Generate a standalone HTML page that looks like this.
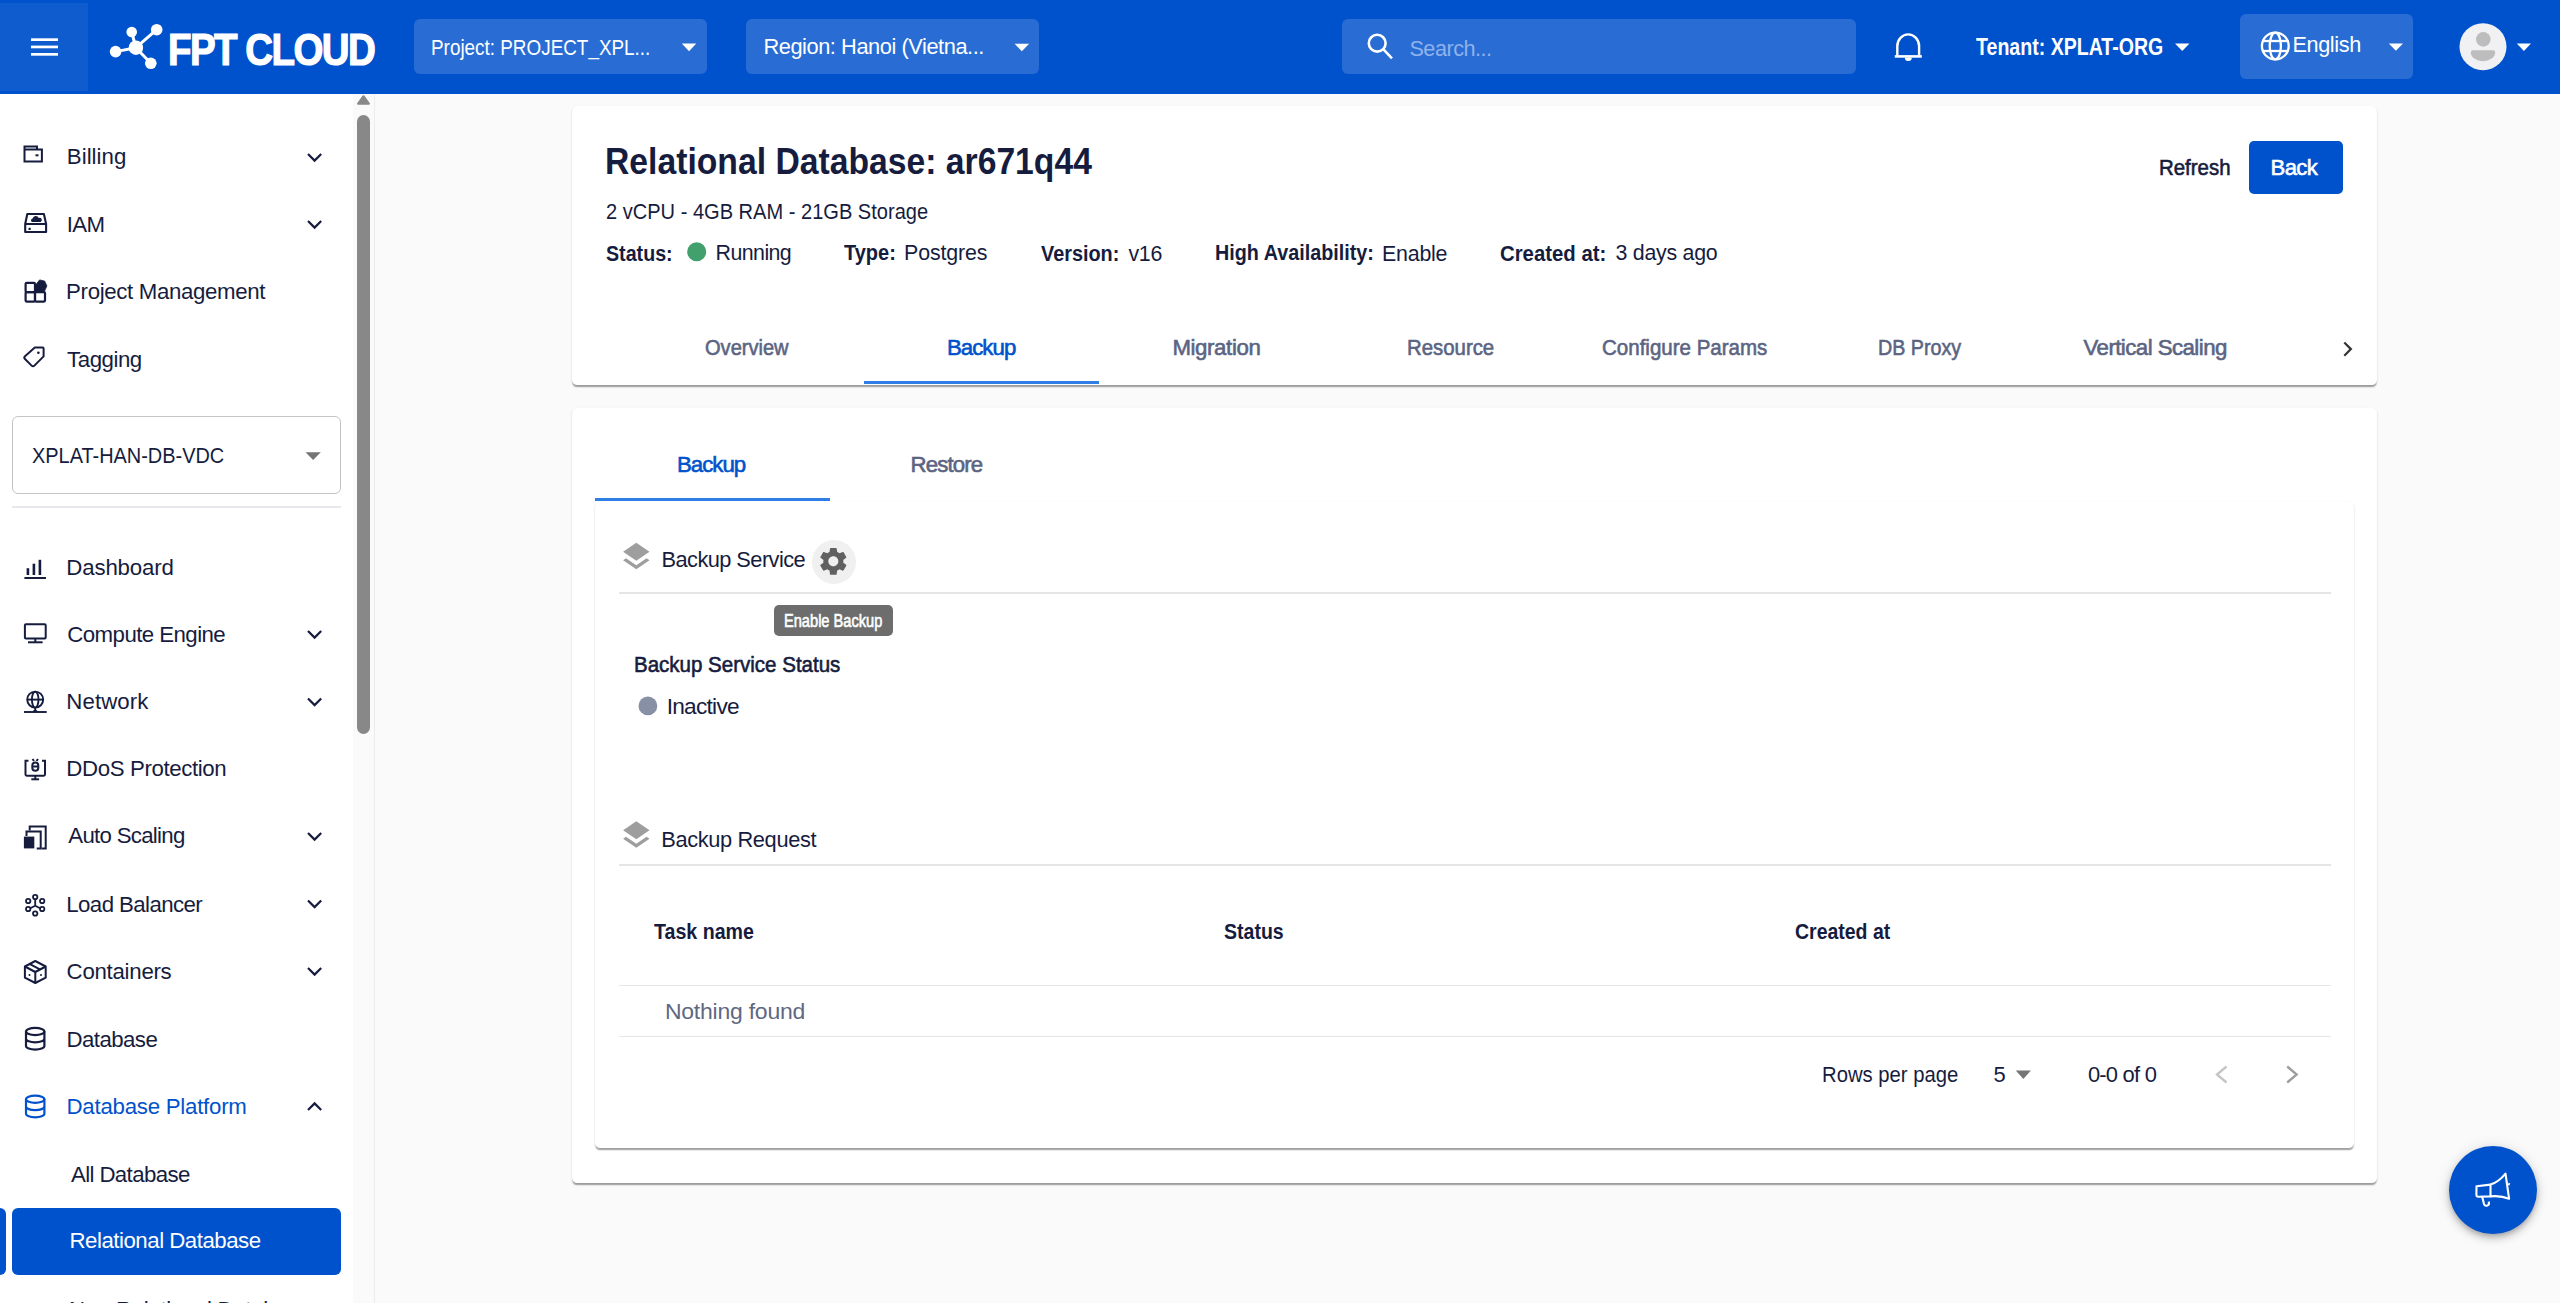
<!DOCTYPE html>
<html><head><meta charset="utf-8">
<style>
html,body{margin:0;padding:0}
body{width:2560px;height:1303px;overflow:hidden;background:#fafafa;position:relative;font-family:"Liberation Sans",sans-serif}
.a{position:absolute;box-sizing:border-box}
.t{position:absolute;white-space:nowrap;line-height:1.117;font-family:"Liberation Sans",sans-serif}
#hdr{left:0;top:0;width:2560px;height:94px;background:#0052cc}
.hbox{background:rgba(255,255,255,0.16);border-radius:6px}
.card{background:#fff;border-radius:5.3px;box-shadow:0 2.67px 1.33px -1.33px rgba(0,0,0,0.2),0 1.33px 1.33px 0 rgba(0,0,0,0.14),0 1.33px 2.6px 0 rgba(0,0,0,0.10)}
</style></head><body>
<!-- header -->
<div class="a" id="hdr"></div>
<div class="a" style="left:0;top:3px;width:88px;height:88px;background:rgba(255,255,255,0.06)"></div>
<div class="a hbox" style="left:414px;top:19px;width:293px;height:55px"></div>
<div class="a hbox" style="left:746px;top:19px;width:293px;height:55px"></div>
<div class="a hbox" style="left:1342px;top:19px;width:514px;height:55px"></div>
<div class="a hbox" style="left:2240px;top:14px;width:173px;height:65px"></div>
<!-- sidebar -->
<div class="a" style="left:0;top:94px;width:374px;height:1209px;background:#fff"></div>
<div class="a" style="left:353px;top:94px;width:21px;height:1209px;background:#fafafa"></div>
<div class="a" style="left:374px;top:94px;width:1px;height:1209px;background:#ececec"></div>
<div class="a" style="left:357px;top:114.5px;width:13px;height:619px;background:#888;border-radius:7px"></div>
<div class="a" style="left:12px;top:416px;width:329px;height:78px;border:1.33px solid #c4c4c4;border-radius:6px"></div>
<div class="a" style="left:12px;top:506px;width:329px;height:1.5px;background:#e6e8ee"></div>
<div class="a" style="left:12px;top:1207.5px;width:329px;height:67.5px;background:#0052cc;border-radius:6px"></div>
<div class="a" style="left:0;top:1207.5px;width:5.5px;height:67.5px;background:#0052cc;border-radius:0 6px 6px 0"></div>
<!-- main cards -->
<div class="a card" style="left:572px;top:105.5px;width:1805px;height:279px"></div>
<div class="a" style="left:2248.5px;top:140.7px;width:94px;height:53px;background:#0052cc;border-radius:5px"></div>
<div class="a" style="left:864px;top:381px;width:235px;height:3.3px;background:#2f7ee6"></div>
<div class="a card" style="left:572px;top:408px;width:1805px;height:775px"></div>
<div class="a" style="left:595px;top:498px;width:235px;height:3.3px;background:#2f7ee6"></div>
<div class="a card" style="left:595.4px;top:501.5px;width:1759px;height:646.5px"></div>
<div class="a" style="left:619px;top:592px;width:1712px;height:1.5px;background:#e5e5e5"></div>
<div class="a" style="left:811.5px;top:539.5px;width:44px;height:44px;border-radius:50%;background:#f0f0f0"></div>
<div class="a" style="left:774.2px;top:604.5px;width:119px;height:31.5px;border-radius:5px;background:rgba(97,97,97,0.92)"></div>
<div class="a" style="left:619px;top:864px;width:1712px;height:1.5px;background:#e5e5e5"></div>
<div class="a" style="left:619px;top:984.8px;width:1712px;height:1.4px;background:#e6e6e6"></div>
<div class="a" style="left:619px;top:1035.8px;width:1712px;height:1.4px;background:#e6e6e6"></div>
<div class="a" style="left:2448.5px;top:1146.4px;width:88px;height:88px;border-radius:50%;background:#0052cc;box-shadow:0 3px 5px -1px rgba(0,0,0,0.2),0 5px 8px 0 rgba(0,0,0,0.14),0 1px 14px 0 rgba(0,0,0,0.12)"></div>
<svg class="a" style="left:0;top:0" width="2560" height="1303" viewBox="0 0 2560 1303">
<!-- hamburger -->
<g fill="#fff"><rect x="31" y="38.3" width="27" height="2.7"/><rect x="31" y="45.6" width="27" height="2.7"/><rect x="31" y="53" width="27" height="2.7"/></g>
<!-- logo icon -->
<g fill="#fff" stroke="#fff">
<line x1="135.9" y1="47.7" x2="131.7" y2="32" stroke-width="3"/>
<line x1="135.9" y1="47.7" x2="156.7" y2="29.7" stroke-width="3"/>
<line x1="135.9" y1="47.7" x2="115.6" y2="51.6" stroke-width="3"/>
<line x1="135.9" y1="47.7" x2="150.8" y2="63.3" stroke-width="3"/>
<circle cx="135.9" cy="47.7" r="7.2" stroke="none"/>
<circle cx="131.7" cy="32" r="5.3" stroke="none"/>
<circle cx="156.7" cy="29.7" r="5.8" stroke="none"/>
<circle cx="115.6" cy="51.6" r="5.8" stroke="none"/>
<circle cx="150.8" cy="63.3" r="5.8" stroke="none"/>
</g>
<!-- header arrows -->
<g fill="#fff">
<path d="M681.8 43.5h14.5l-7.25 7.8z"/>
<path d="M1014.6 43.7h14.5l-7.25 7.5z"/>
<path d="M2175 43.5h14.5l-7.25 7.5z"/>
<path d="M2388.8 43.4h14.2l-7.1 7.4z"/>
<path d="M2516.8 43.4h14.2l-7.1 7.6z"/>
</g>
<!-- search icon -->
<g fill="none" stroke="#fff" stroke-width="2.6"><circle cx="1377.2" cy="43.2" r="8.4"/><line x1="1383.2" y1="49.2" x2="1392" y2="58.3"/></g>
<!-- bell -->
<g fill="none" stroke="#fff" stroke-width="2.4">
<path d="M1897.3 55.6V46.2a10.9 11.8 0 0 1 21.8 0V55.6"/>
<line x1="1894.8" y1="56.4" x2="1921.8" y2="56.4" stroke-width="2.6"/>
</g>
<path d="M1904.8 57.5h7a3.5 3.6 0 0 1 -7 0z" fill="#fff"/>
<!-- globe -->
<g fill="none" stroke="#fff" stroke-width="2.3">
<circle cx="2275.3" cy="46" r="13.4"/>
<ellipse cx="2275.3" cy="46" rx="5.6" ry="13.4"/>
<line x1="2262" y1="41" x2="2288.6" y2="41"/><line x1="2262" y1="51" x2="2288.6" y2="51"/>
</g>
<!-- avatar -->
<circle cx="2483" cy="46.7" r="23.5" fill="#f1f1f3"/>
<circle cx="2483.3" cy="39.4" r="7.3" fill="#bdbdbd"/>
<path d="M2473 50.2h20a2.2 2.2 0 0 1 2.2 2.2a12.2 8.8 0 0 1 -24.4 0a2.2 2.2 0 0 1 2.2-2.2z" fill="#bdbdbd"/>
<!-- sidebar scrollbar arrow -->
<path d="M363.5 96.2l5.4 7.5h-10.8z" fill="#888" stroke="#888" stroke-width="2" stroke-linejoin="round"/>
<!-- sidebar icons -->
<g fill="none" stroke="#161c3e" stroke-width="2">
<!-- billing wallet -->
<path d="M24.5 149.5h17.4v12h-17.4z M24.5 149.5v-3h12.5v3"/>
</g>
<rect x="35.5" y="154.3" width="3" height="2" fill="#161c3e"/>
<g fill="none" stroke="#161c3e" stroke-width="2.1" stroke-linejoin="round">
<!-- IAM drive -->
<path d="M27.3 214h16.6l2.2 10v8h-20.9v-8z M25.2 224h20.9"/>
</g>
<path d="M32 221.9a1.8 1.8 0 0 1 0.6-3.4a3.3 3.3 0 0 1 6.2-0.4a2 2 0 0 1 1.8 3.8z" fill="#161c3e"/>
<rect x="28.5" y="227.8" width="2.2" height="2.2" fill="#161c3e"/>
<!-- project mgmt -->
<g fill="none" stroke="#161c3e" stroke-width="2.2" stroke-linejoin="round">
<rect x="25.6" y="282.9" width="9.4" height="9.2" rx="1"/>
<rect x="25.6" y="292.1" width="9.4" height="9.5" rx="1"/>
<rect x="35" y="292.1" width="10" height="9.5" rx="1"/>
</g>
<path d="M35.6 291.6v-6.5l4-5.2l5 1.2l2.3 4.8l-2.6 5.7z" fill="#161c3e" stroke="#161c3e" stroke-width="0.8" stroke-linejoin="round"/>
<!-- tagging -->
<path d="M34.8 347.6H42.6a1 1 0 0 1 1 1V356.4L34.4 365.6a2 2 0 0 1 -2.8 0L25 359a2 2 0 0 1 0-2.8z" fill="none" stroke="#161c3e" stroke-width="2" stroke-linejoin="round"/>
<circle cx="38.4" cy="352.8" r="1.3" fill="#161c3e"/>
<!-- select arrow -->
<path d="M305.5 452.2h15.3l-7.65 7.7z" fill="#757575"/>
<!-- dashboard -->
<g fill="#161c3e"><rect x="26.6" y="568.2" width="2.6" height="6.8"/><rect x="32.6" y="563.7" width="2.6" height="11.3"/><rect x="38.6" y="559.8" width="2.6" height="15.2"/><rect x="24.4" y="577" width="21.6" height="2"/></g>
<!-- compute monitor -->
<g fill="none" stroke="#161c3e" stroke-width="2"><rect x="24.9" y="624.2" width="20.8" height="14.2" rx="1"/><line x1="35.3" y1="638.4" x2="35.3" y2="642"/><line x1="28" y1="642.3" x2="42.6" y2="642.3"/></g>
<!-- network globe -->
<g fill="none" stroke="#161c3e" stroke-width="1.9"><circle cx="35.2" cy="699.6" r="8"/><ellipse cx="35.2" cy="699.6" rx="3.3" ry="8"/><line x1="27.2" y1="699.6" x2="43.2" y2="699.6"/><path d="M35.2 707.6v2.5l-2 1.8 M35.2 710.1l2 1.8"/><line x1="24" y1="712" x2="46.7" y2="712"/></g>
<!-- ddos -->
<g fill="none" stroke="#161c3e" stroke-width="2"><path d="M28.5 760.8h-3v13.5a1.5 1.5 0 0 0 1.5 1.5h16.5a1.5 1.5 0 0 0 1.5-1.5v-13.5h-3"/><line x1="35.3" y1="775.8" x2="35.3" y2="779"/><line x1="31.3" y1="779.3" x2="39.1" y2="779.3"/><rect x="32.3" y="762.5" width="6" height="8.2" rx="3"/><path d="M32.5 759l1.5 2 M38 759l-1.5 2 M32.5 766.5h6"/></g>
<!-- auto scaling -->
<g fill="none" stroke="#161c3e" stroke-width="2"><path d="M29.7 830.5v-4h16v21.9h-4"/><path d="M26.5 836v-4.5h14.2v16.9h-4"/></g>
<rect x="23.9" y="836.6" width="10.4" height="11.8" fill="#161c3e"/>
<!-- load balancer -->
<g fill="none" stroke="#161c3e" stroke-width="1.8"><circle cx="35.2" cy="897" r="2.2"/><circle cx="28.2" cy="901" r="2.2"/><circle cx="42.2" cy="901" r="2.2"/><circle cx="28.2" cy="909" r="2.2"/><circle cx="42.2" cy="909" r="2.2"/><circle cx="35.2" cy="913.5" r="2.2"/><path d="M35.2 899.2v6.5 M35.2 905.7l-5 2.5 M35.2 905.7l5 2.5"/></g>
<!-- containers box -->
<g fill="none" stroke="#161c3e" stroke-width="2" stroke-linejoin="round"><path d="M35.3 961l10.4 5.5v11.2l-10.4 5.3l-10.4-5.3v-11.2z"/><path d="M24.9 966.5l10.4 5.5l10.4-5.5 M35.3 972v11 M29.5 963.8l10.4 5.5"/></g>
<circle cx="29.5" cy="975" r="1" fill="#161c3e"/><circle cx="41" cy="975" r="1" fill="#161c3e"/>
<!-- database -->
<g fill="none" stroke="#161c3e" stroke-width="2.2"><ellipse cx="35.2" cy="1031.5" rx="9.2" ry="3.6"/><path d="M26 1031.5v14.5a9.2 3.6 0 0 0 18.4 0v-14.5 M26 1038.8a9.2 3.6 0 0 0 18.4 0"/></g>
<g fill="none" stroke="#0052cc" stroke-width="2.2"><ellipse cx="35.2" cy="1099.3" rx="9.2" ry="3.6"/><path d="M26 1099.3v14.5a9.2 3.6 0 0 0 18.4 0v-14.5 M26 1106.6a9.2 3.6 0 0 0 18.4 0"/></g>
<!-- chevrons -->
<g fill="none" stroke="#161c3e" stroke-width="2.2" stroke-linejoin="miter">
<path d="M308 154l6.6 6.6l6.6-6.6"/>
<path d="M308 221l6.6 6.6l6.6-6.6"/>
<path d="M308 631l6.6 6.6l6.6-6.6"/>
<path d="M308 698.5l6.6 6.6l6.6-6.6"/>
<path d="M308 833l6.6 6.6l6.6-6.6"/>
<path d="M308 900.5l6.6 6.6l6.6-6.6"/>
<path d="M308 968l6.6 6.6l6.6-6.6"/>
<path d="M308 1110l6.6-6.6l6.6 6.6"/>
<path d="M2344.3 342.5l6.6 6.6l-6.6 6.6" stroke="#333"/>
</g>
<!-- layers icons -->
<g fill="#9e9e9e">
<path d="M636.3 542.7l13.2 9l-13.2 9l-13.2-9z"/>
<path d="M626 558.2l10.3 7l10.3-7l2.9 2l-13.2 9l-13.2-9z"/>
<path d="M636.3 821.2l13.2 9l-13.2 9l-13.2-9z"/>
<path d="M626 836.7l10.3 7l10.3-7l2.9 2l-13.2 9l-13.2-9z"/>
</g>
<!-- gear -->
<g transform="translate(816.6 544.6) scale(1.395)" fill="#616161"><path d="M19.14,12.94c0.04-0.3,0.06-0.61,0.06-0.94c0-0.32-0.02-0.64-0.07-0.94l2.03-1.58c0.18-0.14,0.23-0.41,0.12-0.61 l-1.92-3.32c-0.12-0.22-0.37-0.29-0.59-0.22l-2.39,0.96c-0.5-0.38-1.03-0.7-1.62-0.94L14.4,2.81c-0.04-0.24-0.24-0.41-0.48-0.41 h-3.84c-0.24,0-0.43,0.17-0.47,0.41L9.25,5.35C8.66,5.59,8.12,5.92,7.63,6.29L5.24,5.33c-0.22-0.08-0.47,0-0.59,0.22L2.740,8.87 C2.62,9.08,2.66,9.34,2.86,9.48l2.03,1.58C4.84,11.36,4.8,11.69,4.8,12s0.02,0.64,0.07,0.94l-2.03,1.58 c-0.18,0.14-0.23,0.41-0.12,0.61l1.92,3.32c0.12,0.22,0.37,0.29,0.59,0.22l2.39-0.96c0.5,0.38,1.03,0.7,1.62,0.94l0.36,2.54 c0.05,0.24,0.24,0.41,0.48,0.41h3.84c0.24,0,0.44-0.17,0.47-0.41l0.36-2.54c0.59-0.24,1.13-0.56,1.62-0.94l2.39,0.96 c0.22,0.08,0.47,0,0.59-0.22l1.92-3.32c0.12-0.22,0.07-0.47-0.12-0.61L19.14,12.94z M12,15.6c-1.98,0-3.6-1.62-3.6-3.6 s1.62-3.6,3.6-3.6s3.6,1.62,3.6,3.6S13.98,15.6,12,15.6z"/></g>
<!-- status dots -->
<circle cx="696.7" cy="251.8" r="9.5" fill="#41a06c"/>
<circle cx="647.9" cy="705.9" r="9.4" fill="#8890a6"/>
<!-- pagination -->
<path d="M2015.8 1070.6h15.1l-7.55 8.5z" fill="#757575"/>
<g fill="none" stroke-width="2.3"><path d="M2226.5 1066.5l-9.5 8l9.5 8" stroke="#c4c4c4"/><path d="M2287.2 1066.5l9.5 8l-9.5 8" stroke="#9e9e9e"/></g>
<!-- megaphone -->
<g fill="none" stroke="#fff" stroke-width="2.1" stroke-linejoin="round">
<path d="M2476.5 1186.2l14-1.6v11.8l-12.6 0.3a1.6 1.6 0 0 1 -1.5-1.6z"/>
<path d="M2490.5 1184.6q8.5-2.8 15-11l3.6 25.2q-8-3.4-18.6-2.4"/>
<path d="M2482.2 1196.7l1.8 7.4a2.6 2.6 0 0 0 5-1.2l-0.4-1.3"/>
<path d="M2508.2 1183.8l1.6 0.6" stroke-width="2.4"/>
</g>
</svg>

<div class="t" id="h_logo" style="left:167.80px;top:23.69px;font-size:44.77px;font-weight:700;color:#fff;letter-spacing:-1.797px;-webkit-text-stroke:1.2px #fff;transform:scaleX(0.8600);transform-origin:0 0;">FPT CLOUD</div>
<div class="t" id="h_proj" style="left:431.20px;top:35.57px;font-size:21.80px;font-weight:400;color:#fff;letter-spacing:0.000px;transform:scaleX(0.8664);transform-origin:0 0;">Project: PROJECT_XPL...</div>
<div class="t" id="h_reg" style="left:763.40px;top:35.47px;font-size:21.80px;font-weight:400;color:#fff;letter-spacing:-0.435px;">Region: Hanoi (Vietna...</div>
<div class="t" id="h_search" style="left:1409.40px;top:36.50px;font-size:21.66px;font-weight:400;color:#8fb1ec;letter-spacing:-0.500px;">Search...</div>
<div class="t" id="h_tenant" style="left:1976.00px;top:34.35px;font-size:23.26px;font-weight:700;color:#fff;letter-spacing:0.000px;transform:scaleX(0.8416);transform-origin:0 0;">Tenant: XPLAT-ORG</div>
<div class="t" id="h_lang" style="left:2292.40px;top:32.90px;font-size:21.66px;font-weight:400;color:#fff;letter-spacing:-0.364px;">English</div>
<div class="t" id="s_billing" style="left:66.80px;top:144.87px;font-size:22.24px;font-weight:400;color:#161c3e;letter-spacing:0.033px;">Billing</div>
<div class="t" id="s_iam" style="left:66.80px;top:213.07px;font-size:22.24px;font-weight:400;color:#161c3e;letter-spacing:-0.700px;">IAM</div>
<div class="t" id="s_pm" style="left:66.10px;top:280.07px;font-size:22.24px;font-weight:400;color:#161c3e;letter-spacing:-0.340px;">Project Management</div>
<div class="t" id="s_tag" style="left:67.10px;top:347.67px;font-size:22.24px;font-weight:400;color:#161c3e;letter-spacing:-0.469px;">Tagging</div>
<div class="t" id="s_sel" style="left:31.60px;top:443.67px;font-size:22.24px;font-weight:400;color:#161c3e;letter-spacing:0.000px;transform:scaleX(0.8960);transform-origin:0 0;">XPLAT-HAN-DB-VDC</div>
<div class="t" id="s_dash" style="left:66.30px;top:555.67px;font-size:22.24px;font-weight:400;color:#161c3e;letter-spacing:-0.150px;">Dashboard</div>
<div class="t" id="s_ce" style="left:67.30px;top:622.87px;font-size:22.24px;font-weight:400;color:#161c3e;letter-spacing:-0.557px;">Compute Engine</div>
<div class="t" id="s_net" style="left:66.30px;top:689.67px;font-size:22.24px;font-weight:400;color:#161c3e;letter-spacing:0.102px;">Network</div>
<div class="t" id="s_ddos" style="left:66.30px;top:757.17px;font-size:22.24px;font-weight:400;color:#161c3e;letter-spacing:-0.370px;">DDoS Protection</div>
<div class="t" id="s_as" style="left:68.30px;top:824.47px;font-size:22.24px;font-weight:400;color:#161c3e;letter-spacing:-0.710px;">Auto Scaling</div>
<div class="t" id="s_lb" style="left:66.30px;top:892.57px;font-size:22.24px;font-weight:400;color:#161c3e;letter-spacing:-0.585px;">Load Balancer</div>
<div class="t" id="s_cont" style="left:66.60px;top:960.07px;font-size:22.24px;font-weight:400;color:#161c3e;letter-spacing:-0.265px;">Containers</div>
<div class="t" id="s_db" style="left:66.60px;top:1027.87px;font-size:22.24px;font-weight:400;color:#161c3e;letter-spacing:-0.571px;">Database</div>
<div class="t" id="s_all" style="left:71.00px;top:1162.57px;font-size:22.24px;font-weight:400;color:#161c3e;letter-spacing:-0.619px;">All Database</div>
<div class="t" id="s_dbp" style="left:66.50px;top:1095.37px;font-size:22.24px;font-weight:400;color:#0052cc;letter-spacing:-0.238px;">Database Platform</div>
<div class="t" id="s_rel" style="left:69.50px;top:1229.47px;font-size:22.24px;font-weight:400;color:#fff;letter-spacing:-0.479px;">Relational Database</div>
<div class="t" id="s_nonrel" style="left:69.00px;top:1297.67px;font-size:22.24px;font-weight:400;color:#161c3e;letter-spacing:-0.318px;">Non-Relational Database</div>
<div class="t" id="m_title" style="left:605.00px;top:141.06px;font-size:37.06px;font-weight:700;color:#161c3e;letter-spacing:0.000px;transform:scaleX(0.9095);transform-origin:0 0;">Relational Database: ar671q44</div>
<div class="t" id="m_sub" style="left:606.00px;top:199.18px;font-size:22.67px;font-weight:400;color:#161c3e;letter-spacing:0.000px;transform:scaleX(0.8852);transform-origin:0 0;">2 vCPU - 4GB RAM - 21GB Storage</div>
<div class="t" id="m_st_l" style="left:606.00px;top:242.66px;font-size:21.37px;font-weight:700;color:#161c3e;letter-spacing:0.000px;transform:scaleX(0.9203);transform-origin:0 0;">Status:</div>
<div class="t" id="m_st_v" style="left:715.60px;top:241.86px;font-size:21.37px;font-weight:400;color:#161c3e;letter-spacing:-0.568px;">Running</div>
<div class="t" id="m_ty_l" style="left:844.20px;top:241.86px;font-size:21.37px;font-weight:700;color:#161c3e;letter-spacing:0.000px;transform:scaleX(0.9362);transform-origin:0 0;">Type:</div>
<div class="t" id="m_ty_v" style="left:904.00px;top:241.86px;font-size:21.37px;font-weight:400;color:#161c3e;letter-spacing:-0.118px;">Postgres</div>
<div class="t" id="m_ve_l" style="left:1041.10px;top:242.66px;font-size:21.37px;font-weight:700;color:#161c3e;letter-spacing:0.000px;transform:scaleX(0.9294);transform-origin:0 0;">Version:</div>
<div class="t" id="m_ve_v" style="left:1128.40px;top:242.66px;font-size:21.37px;font-weight:400;color:#161c3e;letter-spacing:-0.200px;">v16</div>
<div class="t" id="m_ha_l" style="left:1214.50px;top:241.86px;font-size:21.37px;font-weight:700;color:#161c3e;letter-spacing:0.000px;transform:scaleX(0.9250);transform-origin:0 0;">High Availability:</div>
<div class="t" id="m_ha_v" style="left:1382.10px;top:242.66px;font-size:21.37px;font-weight:400;color:#161c3e;letter-spacing:-0.240px;">Enable</div>
<div class="t" id="m_cr_l" style="left:1499.50px;top:242.66px;font-size:21.37px;font-weight:700;color:#161c3e;letter-spacing:0.000px;transform:scaleX(0.9525);transform-origin:0 0;">Created at:</div>
<div class="t" id="m_cr_v" style="left:1615.60px;top:241.86px;font-size:21.37px;font-weight:400;color:#161c3e;letter-spacing:-0.270px;">3 days ago</div>
<div class="t" id="m_refresh" style="left:2159.40px;top:155.61px;font-size:22.09px;font-weight:400;color:#161c3e;letter-spacing:0.000px;-webkit-text-stroke:0.6px #161c3e;transform:scaleX(0.9252);transform-origin:0 0;">Refresh</div>
<div class="t" id="m_back" style="left:2270.60px;top:155.61px;font-size:22.09px;font-weight:400;color:#fff;letter-spacing:-0.667px;-webkit-text-stroke:0.6px #fff;">Back</div>
<div class="t" id="t_ov" style="left:704.70px;top:336.27px;font-size:22.24px;font-weight:400;color:#5b6482;letter-spacing:0.000px;-webkit-text-stroke:0.6px #5b6482;transform:scaleX(0.9022);transform-origin:0 0;">Overview</div>
<div class="t" id="t_bk" style="left:946.90px;top:335.87px;font-size:22.24px;font-weight:400;color:#0052cc;letter-spacing:-0.960px;-webkit-text-stroke:0.6px #0052cc;">Backup</div>
<div class="t" id="t_mi" style="left:1172.40px;top:335.87px;font-size:22.24px;font-weight:400;color:#5b6482;letter-spacing:-0.375px;-webkit-text-stroke:0.6px #5b6482;">Migration</div>
<div class="t" id="t_re" style="left:1406.90px;top:336.27px;font-size:22.24px;font-weight:400;color:#5b6482;letter-spacing:0.000px;-webkit-text-stroke:0.6px #5b6482;transform:scaleX(0.9162);transform-origin:0 0;">Resource</div>
<div class="t" id="t_cp" style="left:1601.90px;top:335.87px;font-size:22.24px;font-weight:400;color:#5b6482;letter-spacing:0.000px;-webkit-text-stroke:0.6px #5b6482;transform:scaleX(0.9228);transform-origin:0 0;">Configure Params</div>
<div class="t" id="t_db" style="left:1877.80px;top:335.87px;font-size:22.24px;font-weight:400;color:#5b6482;letter-spacing:0.000px;-webkit-text-stroke:0.6px #5b6482;transform:scaleX(0.8863);transform-origin:0 0;">DB Proxy</div>
<div class="t" id="t_vs" style="left:2083.50px;top:335.87px;font-size:22.24px;font-weight:400;color:#5b6482;letter-spacing:-0.545px;-webkit-text-stroke:0.6px #5b6482;">Vertical Scaling</div>
<div class="t" id="c_bk" style="left:677.00px;top:452.67px;font-size:22.24px;font-weight:400;color:#0052cc;letter-spacing:-1.000px;-webkit-text-stroke:0.6px #0052cc;">Backup</div>
<div class="t" id="c_rs" style="left:910.60px;top:452.67px;font-size:22.24px;font-weight:400;color:#5b6482;letter-spacing:-0.898px;-webkit-text-stroke:0.6px #5b6482;">Restore</div>
<div class="t" id="c_bs" style="left:661.50px;top:548.47px;font-size:21.80px;font-weight:400;color:#161c3e;letter-spacing:-0.557px;">Backup Service</div>
<div class="t" id="c_tip" style="left:784.40px;top:611.62px;font-size:17.44px;font-weight:400;color:#fff;letter-spacing:0.000px;-webkit-text-stroke:0.6px #fff;transform:scaleX(0.8380);transform-origin:0 0;">Enable Backup</div>
<div class="t" id="c_bss" style="left:634.10px;top:653.47px;font-size:22.24px;font-weight:400;color:#161c3e;letter-spacing:0.000px;-webkit-text-stroke:0.6px #161c3e;transform:scaleX(0.9226);transform-origin:0 0;">Backup Service Status</div>
<div class="t" id="c_inact" style="left:666.70px;top:694.38px;font-size:22.67px;font-weight:400;color:#161c3e;letter-spacing:-0.740px;">Inactive</div>
<div class="t" id="c_br" style="left:661.30px;top:827.77px;font-size:21.80px;font-weight:400;color:#161c3e;letter-spacing:-0.366px;">Backup Request</div>
<div class="t" id="c_tn" style="left:654.30px;top:920.37px;font-size:22.24px;font-weight:700;color:#161c3e;letter-spacing:0.000px;transform:scaleX(0.8818);transform-origin:0 0;">Task name</div>
<div class="t" id="c_st" style="left:1223.50px;top:920.37px;font-size:22.24px;font-weight:700;color:#161c3e;letter-spacing:0.000px;transform:scaleX(0.8781);transform-origin:0 0;">Status</div>
<div class="t" id="c_ca" style="left:1794.60px;top:920.07px;font-size:22.24px;font-weight:700;color:#161c3e;letter-spacing:0.000px;transform:scaleX(0.8759);transform-origin:0 0;">Created at</div>
<div class="t" id="c_nf" style="left:664.90px;top:998.52px;font-size:22.97px;font-weight:400;color:#5f6883;letter-spacing:-0.218px;">Nothing found</div>
<div class="t" id="c_rpp" style="left:1821.80px;top:1063.34px;font-size:21.95px;font-weight:400;color:#161c3e;letter-spacing:0.000px;transform:scaleX(0.9241);transform-origin:0 0;">Rows per page</div>
<div class="t" id="c_5" style="left:1993.40px;top:1063.14px;font-size:21.95px;font-weight:400;color:#161c3e;letter-spacing:-0.800px;">5</div>
<div class="t" id="c_of" style="left:2087.90px;top:1063.14px;font-size:21.95px;font-weight:400;color:#161c3e;letter-spacing:-0.770px;">0-0 of 0</div>
</body></html>
